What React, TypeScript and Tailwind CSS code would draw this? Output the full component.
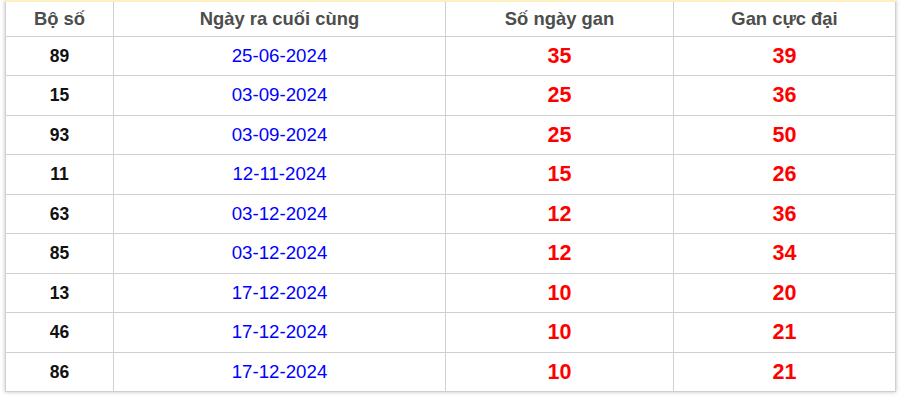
const rows = [
  { so: "89", ngay: "25-06-2024", gan: 35, max: 39 },
  { so: "15", ngay: "03-09-2024", gan: 25, max: 36 },
  { so: "93", ngay: "03-09-2024", gan: 25, max: 50 },
  { so: "11", ngay: "12-11-2024", gan: 15, max: 26 },
  { so: "63", ngay: "03-12-2024", gan: 12, max: 36 },
  { so: "85", ngay: "03-12-2024", gan: 12, max: 34 },
  { so: "13", ngay: "17-12-2024", gan: 10, max: 20 },
  { so: "46", ngay: "17-12-2024", gan: 10, max: 21 },
  { so: "86", ngay: "17-12-2024", gan: 10, max: 21 },
];

export default function App() {
  return (
    <div className="bg-white w-[903px] h-[398px] px-[5px] font-['Liberation_Sans',Arial,sans-serif]">
      <div className="w-[891px] shadow-[0_0_4px_rgba(0,0,0,0.25)]">
        <div className="h-[2px] bg-[#fdf0c0]" />
        <table className="w-full table-fixed border-collapse border border-t-0 border-[#d0d0d0] text-center">
          <colgroup>
            <col className="w-[108px]" />
            <col className="w-[332px]" />
            <col className="w-[228px]" />
            <col />
          </colgroup>
          <thead>
            <tr className="h-[34px]">
              {["Bộ số", "Ngày ra cuối cùng", "Số ngày gan", "Gan cực đại"].map((h) => (
                <th
                  key={h}
                  className="border border-t-0 border-[#d0d0d0] text-[18.4px] font-bold text-[#4d4d4d] p-0 align-middle"
                >
                  {h}
                </th>
              ))}
            </tr>
          </thead>
          <tbody>
            {rows.map((r, i) => (
              <tr key={i} className="h-[39.5px]">
                <td className="border border-[#d0d0d0] text-[17.5px] font-bold text-[#111] p-0">{r.so}</td>
                <td className="border border-[#d0d0d0] text-[18.7px] text-[#0000ff] p-0">{r.ngay}</td>
                <td className="border border-[#d0d0d0] text-[21.5px] font-bold text-[#ff0000] p-0">{r.gan}</td>
                <td className="border border-[#d0d0d0] text-[21.5px] font-bold text-[#ff0000] p-0">{r.max}</td>
              </tr>
            ))}
          </tbody>
        </table>
      </div>
    </div>
  );
}
